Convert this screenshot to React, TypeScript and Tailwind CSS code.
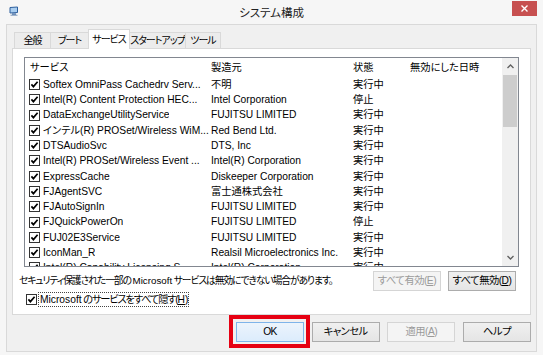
import React from 'react';

type Row = { name: string; maker: string; state: string };

const rows: Row[] = [
  { name: 'Softex OmniPass Cachedrv Serv...', maker: '不明', state: '実行中' },
  { name: 'Intel(R) Content Protection HEC...', maker: 'Intel Corporation', state: '停止' },
  { name: 'DataExchangeUtilityService', maker: 'FUJITSU LIMITED', state: '実行中' },
  { name: 'インテル(R) PROSet/Wireless WiM...', maker: 'Red Bend Ltd.', state: '実行中' },
  { name: 'DTSAudioSvc', maker: 'DTS, Inc', state: '実行中' },
  { name: 'Intel(R) PROSet/Wireless Event ...', maker: 'Intel(R) Corporation', state: '実行中' },
  { name: 'ExpressCache', maker: 'Diskeeper Corporation', state: '実行中' },
  { name: 'FJAgentSVC', maker: '富士通株式会社', state: '実行中' },
  { name: 'FJAutoSignIn', maker: 'FUJITSU LIMITED', state: '実行中' },
  { name: 'FJQuickPowerOn', maker: 'FUJITSU LIMITED', state: '停止' },
  { name: 'FUJ02E3Service', maker: 'FUJITSU LIMITED', state: '実行中' },
  { name: 'IconMan_R', maker: 'Realsil Microelectronics Inc.', state: '実行中' },
  { name: 'Intel(R) Capability Licensing S...', maker: 'Intel(R) Corporation', state: '実行中' },
];

const tabs = ['全般', 'ブート', 'サービス', 'スタートアップ', 'ツール'];
const tabWidths = ['w-[37px]', 'w-[39px]', 'w-[42px]', 'w-[57px]', 'w-[36px]'];

function Check() {
  return (
    <svg width="11" height="11" viewBox="0 0 11 11" className="shrink-0">
      <rect x="0.5" y="0.5" width="10" height="10" fill="#fff" stroke="#333" />
      <path d="M2.4 5.4 L4.4 7.6 L8.6 2.8" fill="none" stroke="#000" strokeWidth="1.7" />
    </svg>
  );
}

function Btn({ children, disabled, primary }: { children: React.ReactNode; disabled?: boolean; primary?: boolean }) {
  let cls = 'border-[#acacac] bg-linear-to-b from-[#f0f0f0] to-[#e5e5e5] text-black';
  if (disabled) cls = 'border-[#d5d5d5] bg-[#f4f4f4] text-[#9a9a9a]';
  if (primary) cls = 'border-[#7eb4ea] bg-linear-to-b from-[#ecf4fc] to-[#dcecfc] text-black';
  return (
    <div className={`w-[68px] h-[20px] border flex items-center justify-center tracking-[-0.5px] ${cls}`}>
      {children}
    </div>
  );
}

export default function App() {
  return (
    <div className="relative w-[543px] h-[355px] overflow-hidden whitespace-nowrap bg-[#f6f6f6] flex flex-col font-['Liberation_Sans','Noto_Sans_CJK_JP',sans-serif] [font-feature-settings:'palt'] text-[10.25px] text-black">
      {/* title bar */}
      <div className="h-[24px] grid grid-cols-[1fr_auto_1fr] shrink-0">
        <div className="pl-[9px] pt-[6px]">
          <svg width="10" height="10" viewBox="0 0 10 10">
            <path d="M1 1.5 L8.5 1 L8.5 6.5 L1 7 Z" fill="#a9cdef" stroke="#2d5f9e" strokeWidth="1" />
            <rect x="3" y="7.5" width="4" height="1.2" fill="#2d5f9e" />
            <rect x="1.5" y="8.7" width="7" height="1" fill="#7d98bb" />
          </svg>
        </div>
        <div className="pt-[6px] text-[11.5px] leading-[15px] text-[#222]">システム構成</div>
        <div className="flex justify-end pr-[6px] pt-[1px]">
          <div className="w-[25px] h-[15px] bg-[#c75050] flex items-center justify-center">
            <svg width="7" height="7" viewBox="0 0 7 7">
              <path d="M0.5 0.5 L6.5 6.5 M6.5 0.5 L0.5 6.5" stroke="#fff" strokeWidth="1.4" />
            </svg>
          </div>
        </div>
      </div>

      {/* client area */}
      <div className="mx-[6px] mb-[3px] flex-1 border border-[#d9d9d9] bg-[#f0f0f0] flex flex-col px-[5px] pt-[4px]">
        <div className="relative z-10 h-[19px] flex items-end pl-[2px] text-[10px] tracking-[-1px]">
          {tabs.map((t, i) =>
            i === 2 ? (
              <div
                key={t}
                className={`${tabWidths[i]} h-[20px] -mb-px -ml-px bg-white border border-b-0 border-[#d9d9d9] flex items-center justify-center`}
              >
                {t}
              </div>
            ) : (
              <div
                key={t}
                className={`${tabWidths[i]} h-[16px] ${i === 0 ? '' : '-ml-px'} bg-[#ececec] border border-b-0 border-[#d9d9d9] flex items-center justify-center`}
              >
                {t}
              </div>
            )
          )}
        </div>

        <div className="h-[267px] border border-[#d9d9d9] bg-white flex flex-col pt-[8px]">
          <div className="mx-[11px] h-[210px] border border-[#828790] flex">
            <div className="flex-1 overflow-hidden flex flex-col">
              <div className="h-[19px] shrink-0 flex items-center">
                <div className="w-[186px] pl-[5px]">サービス</div>
                <div className="w-[142px]">製造元</div>
                <div className="w-[57px]">状態</div>
                <div className="flex-1">無効にした日時</div>
              </div>
              {rows.map((r) => (
                <div key={r.name} className="h-[15.27px] shrink-0 flex items-center">
                  <div className="w-[186px] pl-[4px] pr-[2px] flex items-center gap-[3px] overflow-hidden">
                    <Check />
                    <span className="overflow-hidden">{r.name}</span>
                  </div>
                  <div className="w-[142px] overflow-hidden">{r.maker}</div>
                  <div className="w-[57px]">{r.state}</div>
                  <div className="flex-1" />
                </div>
              ))}
            </div>
            <div className="w-[16px] flex flex-col bg-[#f0f0f0]">
              <div className="h-[17px] flex items-center justify-center">
                <svg width="7" height="5" viewBox="0 0 7 5">
                  <path d="M0.5 4 L3.5 1 L6.5 4" fill="none" stroke="#606060" strokeWidth="1.3" />
                </svg>
              </div>
              <div className="h-[52px] mx-[1px] bg-[#cdcdcd]" />
              <div className="flex-1" />
              <div className="h-[17px] flex items-center justify-center">
                <svg width="7" height="5" viewBox="0 0 7 5">
                  <path d="M0.5 1 L3.5 4 L6.5 1" fill="none" stroke="#606060" strokeWidth="1.3" />
                </svg>
              </div>
            </div>
          </div>

          <div className="mt-[4px] h-[20px] flex items-center justify-between pl-[6px] pr-[14px]">
            <div className="text-[9.75px] tracking-[-1.05px]">
              セキュリティ保護された一部の <span className="tracking-normal">Microsoft</span>{' '}
              サービスは無効にできない場合があります。
            </div>
            <div className="flex gap-[7px]">
              <Btn disabled>
                すべて有効(<span className="underline">E</span>)
              </Btn>
              <Btn>
                すべて無効(<span className="underline">D</span>)
              </Btn>
            </div>
          </div>

          <div className="mt-[1px] h-[15px] flex items-center pl-[13px]">
            <Check />
            <div className="ml-px h-[15px] px-[1px] flex items-center border border-dotted border-[#444] tracking-[-1.2px]">
              <span className="tracking-normal">Microsoft</span>&nbsp;のサービスをすべて隠す(
              <span className="underline tracking-normal">H</span>)
            </div>
          </div>
        </div>

        <div className="mt-[7px] flex justify-end gap-[7.67px]">
          <Btn primary>OK</Btn>
          <Btn>キャンセル</Btn>
          <Btn disabled>
            適用(<span className="underline">A</span>)
          </Btn>
          <Btn>ヘルプ</Btn>
        </div>
      </div>

      {/* annotation highlight */}
      <div className="absolute left-[229px] top-[315px] w-[81px] h-[33px] border-4 border-[#e60012]" />
    </div>
  );
}
